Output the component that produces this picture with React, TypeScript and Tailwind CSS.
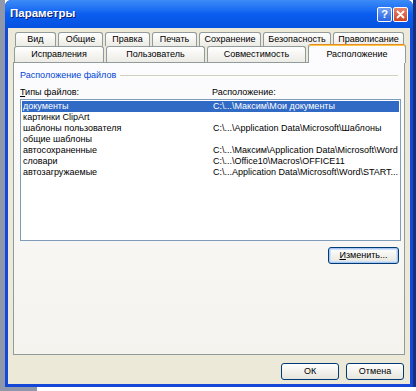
import React from "react";

const font = { fontFamily: '"Liberation Sans", Arial, sans-serif' };

const row1 = [
  { t: "Вид", w: 41 },
  { t: "Общие", w: 45 },
  { t: "Правка", w: 45 },
  { t: "Печать", w: 45 },
  { t: "Сохранение", w: 62 },
  { t: "Безопасность", w: 68 },
  { t: "Правописание", w: 71 },
];

const rows: [string, string][] = [
  ["документы", "C:\\...\\Максим\\Мои документы"],
  ["картинки ClipArt", ""],
  ["шаблоны пользователя", "C:\\...\\Application Data\\Microsoft\\Шаблоны"],
  ["общие шаблоны", ""],
  ["автосохраненные", "C:\\...\\Максим\\Application Data\\Microsoft\\Word"],
  ["словари", "C:\\...\\Office10\\Macros\\OFFICE11"],
  ["автозагружаемые", "C:\\...Application Data\\Microsoft\\Word\\START..."],
];

function Tab({ t, w, h }: { t: string; w: number; h: number }) {
  return (
    <div
      className="flex shrink-0 items-center justify-center whitespace-nowrap rounded-t-[3px] border border-b-0 border-[#919b9c] bg-gradient-to-b from-[#ffffff] to-[#ecebe5] text-[9px] leading-none text-black"
      style={{ width: w, height: h }}
    >
      {t}
    </div>
  );
}

function XPButton({ children, w, def }: { children: React.ReactNode; w: number; def?: boolean }) {
  return (
    <div
      className={`flex h-[17px] shrink-0 items-center justify-center rounded-[3px] border border-[#003c74] bg-gradient-to-b from-[#ffffff] to-[#e6e5dc] text-[9px] leading-none text-black ${
        def ? "shadow-[inset_0_0_0_1px_#a9c6f2,inset_0_0_0_2px_#cee0fa]" : ""
      }`}
      style={{ width: w }}
    >
      {children}
    </div>
  );
}

export default function App() {
  return (
    <div className="flex h-[391px] w-[416px] flex-col overflow-hidden bg-white" style={font}>
      <div className="flex h-[387px] flex-row">
        <div className="w-[5px] shrink-0 bg-[#8f97aa]" />
        <div className="flex w-[408px] shrink-0 flex-col overflow-hidden rounded-t-[6px] bg-[#1648d8]">
          {/* title bar */}
          <div className="flex h-[28px] shrink-0 items-center rounded-t-[6px] bg-gradient-to-b from-[#3d8cf8] via-[#0a5ef0] to-[#0551e0] pl-[5px] pr-[5px]">
            <div className="flex-1 text-[11.5px] font-bold text-white [text-shadow:1px_1px_0_#0a1e78]">Параметры</div>
            <div className="flex gap-[1px]">
              <div className="flex h-[15px] w-[15px] items-center justify-center rounded-[2px] border border-white bg-gradient-to-b from-[#6fa0f8] to-[#2a63e0] text-[11px] font-bold leading-none text-white">
                ?
              </div>
              <div className="flex h-[15px] w-[15px] items-center justify-center rounded-[2px] border border-white bg-gradient-to-b from-[#e9846a] to-[#cc4422]">
                <svg width="9" height="9" viewBox="0 0 9 9">
                  <path d="M1.5 1.5 L7.5 7.5 M7.5 1.5 L1.5 7.5" stroke="white" strokeWidth="1.8" strokeLinecap="round" />
                </svg>
              </div>
            </div>
          </div>
          {/* body */}
          <div className="mx-[3px] mb-[3px] flex flex-1 flex-col bg-[#ece9d8] px-[5px] pt-[4px]">
            {/* tabs */}
            <div className="flex h-[14px] gap-[2px] pl-[2px]">
              {row1.map((r) => (
                <Tab key={r.t} t={r.t} w={r.w} h={14} />
              ))}
            </div>
            <div className="flex h-[16px] items-end gap-[2px] pl-[1px]">
              <Tab t="Исправления" w={90} h={16} />
              <Tab t="Пользователь" w={99} h={16} />
              <Tab t="Совместимость" w={99} h={16} />
              <div className="relative z-10 -mb-[1px] flex h-[19px] w-[98px] shrink-0 items-center justify-center rounded-t-[3px] border border-b-0 border-[#919b9c] border-t-[#e68b2c] bg-[#fcfcfe] text-[9px] leading-none text-black shadow-[inset_0_1px_0_#ffc73c]">
                Расположение
              </div>
            </div>
            {/* panel */}
            <div className="flex h-[293px] flex-col border border-[#919b9c] bg-gradient-to-b from-[#fcfcfe] to-[#f4f3ee] pl-[6px] pr-[3px] pt-[7px]">
              <div className="flex items-center gap-[4px]">
                <span className="text-[9px] leading-[11px] text-[#0046d5]">Расположение файлов</span>
                <div className="mr-[3px] h-[2px] flex-1 border-t border-b border-t-[#d0d0bf] border-b-white" />
              </div>
              <div className="mt-[6px] flex text-[9px] leading-[11px] text-black">
                <span className="w-[192px]">
                  <span className="underline">Т</span>ипы файлов:
                </span>
                <span>Расположение:</span>
              </div>
              <div className="mt-[1px] h-[142px] overflow-hidden border border-[#7f9db9] bg-white px-[1px] pt-[1px]">
                {rows.map(([a, b], i) => (
                  <div
                    key={a}
                    className={`flex h-[11px] items-center overflow-hidden whitespace-nowrap text-[9px] leading-none ${
                      i === 0 ? "bg-[#316ac5] text-white" : "text-black"
                    }`}
                  >
                    <span className="w-[191px] shrink-0 pl-[1px]">{a}</span>
                    <span>{b}</span>
                  </div>
                ))}
              </div>
              <div className="mt-[6px] flex justify-end pr-[2px]">
                <XPButton w={71} def>
                  <span>
                    <span className="underline">И</span>зменить...
                  </span>
                </XPButton>
              </div>
            </div>
            <div className="mt-[8px] flex justify-end gap-[7px] pr-[1px]">
              <XPButton w={58}>ОК</XPButton>
              <XPButton w={58}>Отмена</XPButton>
            </div>
          </div>
        </div>
        <div className="w-[3px] shrink-0 bg-[#16307e]" />
      </div>
      <div className="flex h-[4px]">
        <div className="w-[37px] bg-[#8f97aa]" />
        <div className="flex-1 bg-white" />
      </div>
    </div>
  );
}
